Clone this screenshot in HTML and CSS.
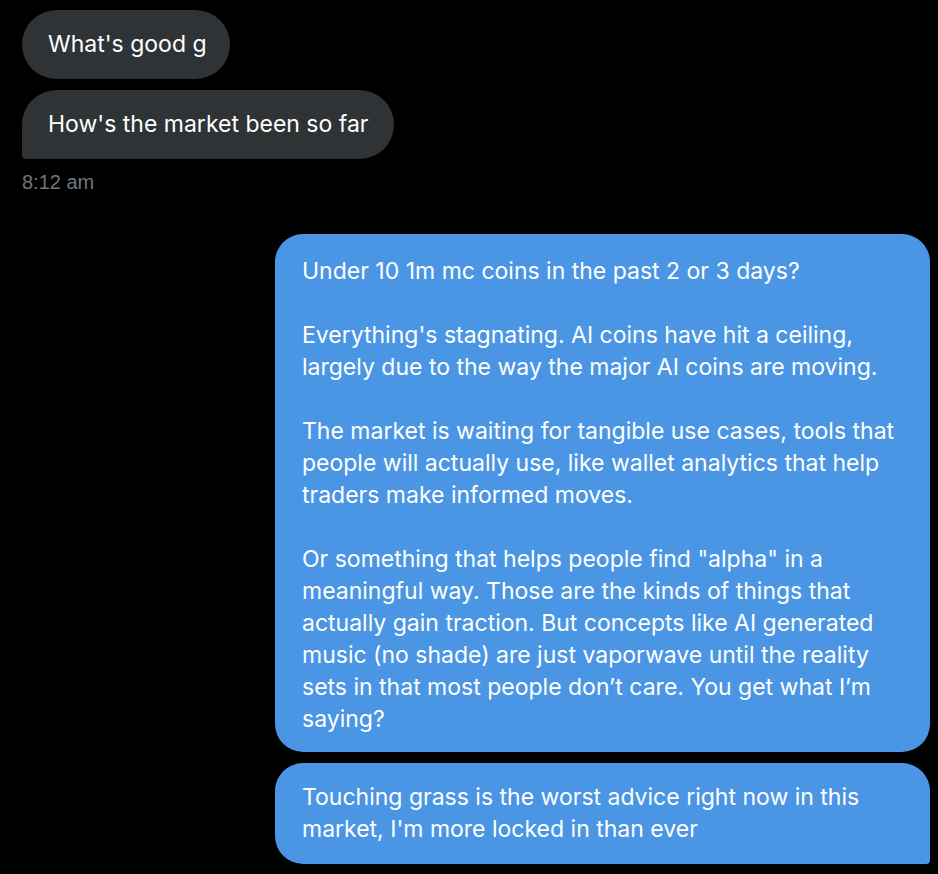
FILE: index.html
```html
<!DOCTYPE html>
<html lang="en">
<head>
<meta charset="utf-8">
<title>Messages</title>
<link rel="stylesheet" href="styles.css">
</head>
<body>
<main class="thread">
  <div class="group received">
    <div class="bubble in pill">What's good g</div>
    <div class="bubble in last">How's the market been so far</div>
    <div class="time">8:12 am</div>
  </div>
  <div class="group sent">
    <div class="bubble out first">
      <p>Under 10 1m mc coins in the past 2 or 3 days?</p>
      <p>Everything's stagnating. AI coins have hit a ceiling,<br>largely due to the way the major AI coins are moving.</p>
      <p>The market is waiting for tangible use cases, tools that<br>people will actually use, like wallet analytics that help<br>traders make informed moves.</p>
      <p>Or something that helps people find "alpha" in a<br>meaningful way. Those are the kinds of things that<br>actually gain traction. But concepts like AI generated<br>music (no shade) are just vaporwave until the reality<br>sets in that most people don’t care. You get what I’m<br>saying?</p>
    </div>
    <div class="bubble out last">
      <p>Touching grass is the worst advice right now in this<br>market, I'm more locked in than ever</p>
    </div>
  </div>
</main>
</body>
</html>
```

FILE: styles.css
```css
html, body {
  margin: 0;
  padding: 0;
  background: #000;
}
body {
  font-family: Inter, "Noto Sans", sans-serif;
  color: #fff;
  font-size: 23px;
  line-height: 32px;
}
.thread {
  display: flex;
  flex-direction: column;
  padding: 10px 8px 0 22px;
}
.group {
  display: flex;
  flex-direction: column;
  gap: 11px;
}
.received {
  align-items: flex-start;
}
.sent {
  align-items: flex-end;
  margin-top: 40px;
}
.bubble {
  box-sizing: border-box;
  padding: 18px 26px 19px 26px;
  border-radius: 35px;
  white-space: nowrap;
}
.bubble p {
  margin: 0 0 32px 0;
}
.bubble p:last-child {
  margin-bottom: 0;
}
.in {
  background: #2f3336;
}
.in.pill {
  padding-right: 23px;
}
.in.last {
  border-bottom-left-radius: 4px;
}
.out {
  background: #4a96e5;
  width: 655px;
  padding-left: 27px;
  border-radius: 28px;
}
.out.first {
  padding-top: 21px;
  padding-bottom: 17px;
}
.out.last {
  border-bottom-right-radius: 4px;
}
.time {
  color: #71767b;
  font-family: "Liberation Sans", Arial, sans-serif;
  font-size: 20px;
  line-height: 24px;
}
```
